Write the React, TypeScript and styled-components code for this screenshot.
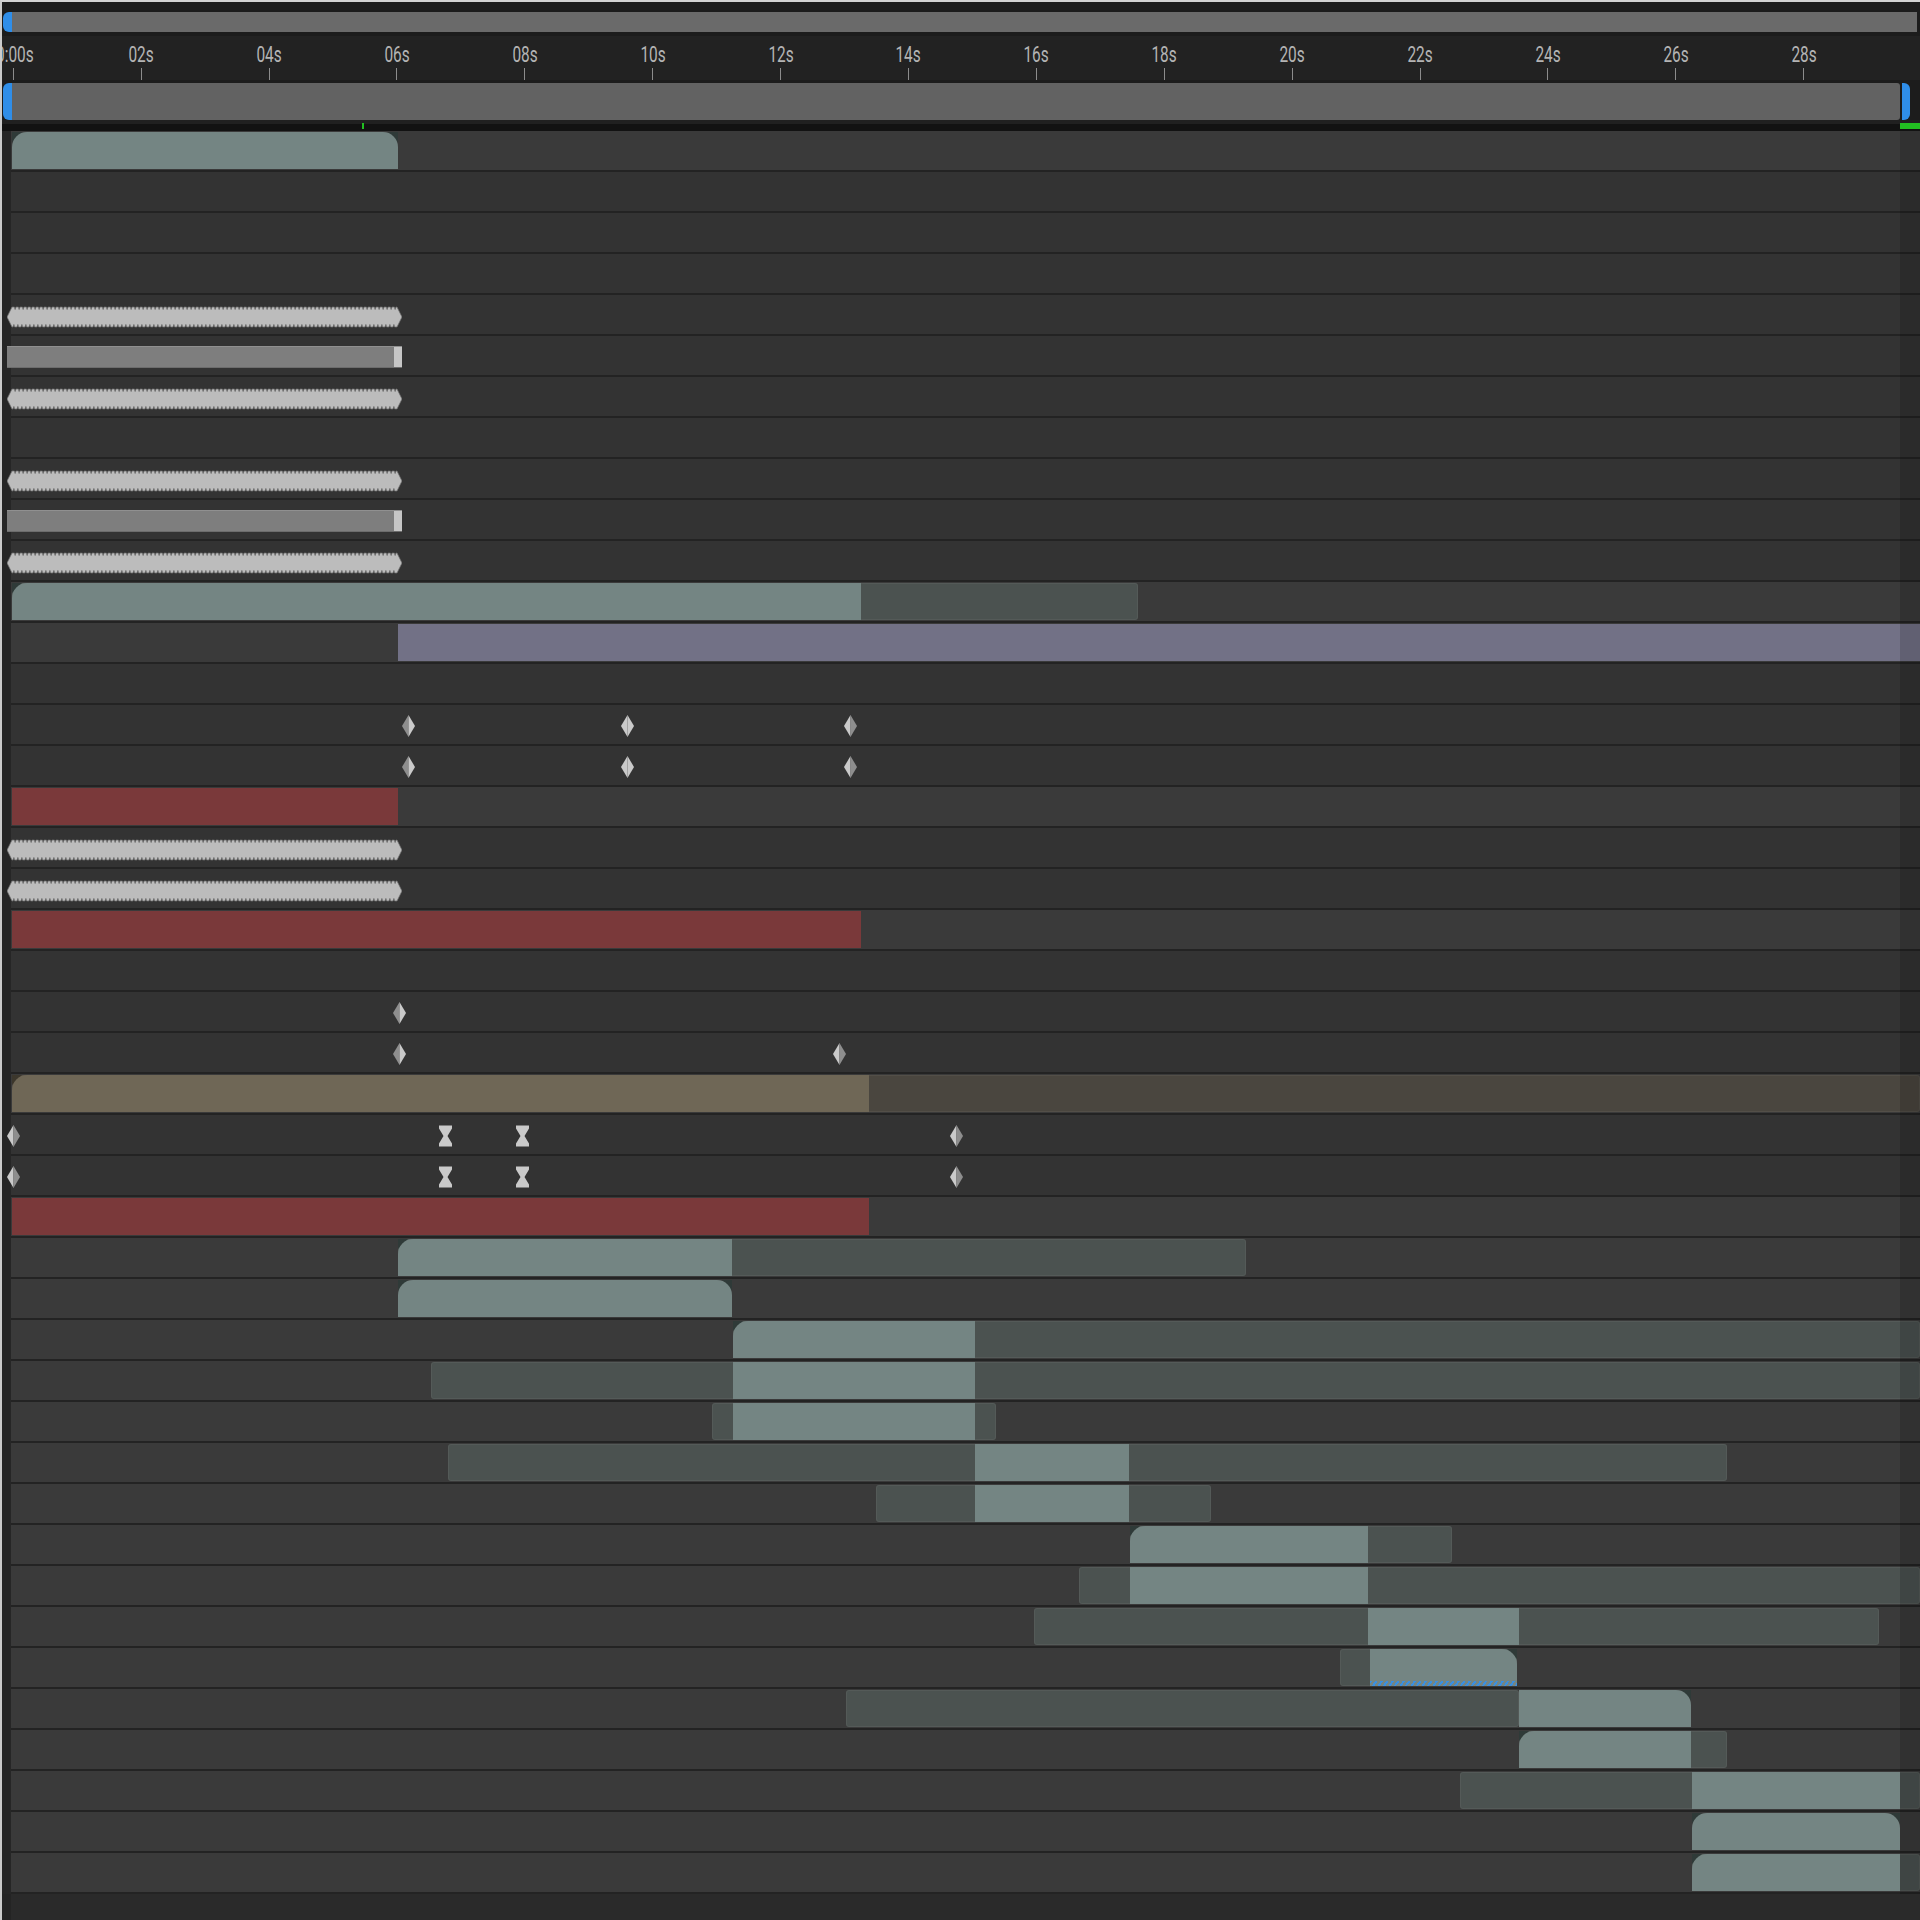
import React from 'react';
import styled, { createGlobalStyle, css } from 'styled-components';

const GlobalStyle = createGlobalStyle`
  html, body { margin: 0; padding: 0; background: #2a2a2a; overflow: hidden; }
  #root { width: 1920px; height: 1920px; }
`;

/* geometry (page px) */
const ROW_LEFT = 11;
const TICK0 = 13.3;
const STEP = 127.9;
const END = 1920;

type Tone = 'teal' | 'red' | 'tan' | 'purple';
type Item =
  | { k: 'clip'; tone: Tone; x1: number; x2: number; nl?: boolean; nr?: boolean; hatch?: boolean }
  | { k: 'ext'; tone: 'teal' | 'tan'; x1: number; x2: number }
  | { k: 'wave' }
  | { k: 'gray' }
  | { k: 'dia'; x: number; v: 'L' | 'R' | 'F' }
  | { k: 'hg'; x: number };

type RowData = { layer: boolean; items: Item[] };

const P = (items: Item[] = []): RowData => ({ layer: false, items });
const L = (items: Item[] = []): RowData => ({ layer: true, items });

const ROWS: RowData[] = [
  L([{ k: 'clip', tone: 'teal', x1: 12, x2: 398, nl: true, nr: true }]),
  P(), P(), P(),
  P([{ k: 'wave' }]),
  P([{ k: 'gray' }]),
  P([{ k: 'wave' }]),
  P(),
  P([{ k: 'wave' }]),
  P([{ k: 'gray' }]),
  P([{ k: 'wave' }]),
  L([{ k: 'ext', tone: 'teal', x1: 12, x2: 1138 }, { k: 'clip', tone: 'teal', x1: 12, x2: 861, nl: true }]),
  L([{ k: 'clip', tone: 'purple', x1: 398, x2: END }]),
  P(),
  P([{ k: 'dia', x: 408, v: 'L' }, { k: 'dia', x: 627, v: 'F' }, { k: 'dia', x: 850, v: 'R' }]),
  P([{ k: 'dia', x: 408, v: 'L' }, { k: 'dia', x: 627, v: 'F' }, { k: 'dia', x: 850, v: 'R' }]),
  L([{ k: 'clip', tone: 'red', x1: 12, x2: 398 }]),
  P([{ k: 'wave' }]),
  P([{ k: 'wave' }]),
  L([{ k: 'clip', tone: 'red', x1: 12, x2: 861 }]),
  P(),
  P([{ k: 'dia', x: 399, v: 'L' }]),
  P([{ k: 'dia', x: 399, v: 'L' }, { k: 'dia', x: 839, v: 'R' }]),
  L([{ k: 'ext', tone: 'tan', x1: 12, x2: END }, { k: 'clip', tone: 'tan', x1: 12, x2: 869, nl: true }]),
  P([{ k: 'dia', x: 13.5, v: 'R' }, { k: 'hg', x: 445 }, { k: 'hg', x: 522 }, { k: 'dia', x: 956, v: 'R' }]),
  P([{ k: 'dia', x: 13.5, v: 'R' }, { k: 'hg', x: 445 }, { k: 'hg', x: 522 }, { k: 'dia', x: 956, v: 'R' }]),
  L([{ k: 'clip', tone: 'red', x1: 12, x2: 869 }]),
  L([{ k: 'ext', tone: 'teal', x1: 398, x2: 1246 }, { k: 'clip', tone: 'teal', x1: 398, x2: 732, nl: true }]),
  L([{ k: 'clip', tone: 'teal', x1: 398, x2: 732, nl: true, nr: true }]),
  L([{ k: 'ext', tone: 'teal', x1: 733, x2: END }, { k: 'clip', tone: 'teal', x1: 733, x2: 975, nl: true }]),
  L([{ k: 'ext', tone: 'teal', x1: 431, x2: END }, { k: 'clip', tone: 'teal', x1: 733, x2: 975 }]),
  L([{ k: 'ext', tone: 'teal', x1: 712, x2: 996 }, { k: 'clip', tone: 'teal', x1: 733, x2: 975 }]),
  L([{ k: 'ext', tone: 'teal', x1: 448, x2: 1727 }, { k: 'clip', tone: 'teal', x1: 975, x2: 1129 }]),
  L([{ k: 'ext', tone: 'teal', x1: 876, x2: 1211 }, { k: 'clip', tone: 'teal', x1: 975, x2: 1129 }]),
  L([{ k: 'ext', tone: 'teal', x1: 1130, x2: 1452 }, { k: 'clip', tone: 'teal', x1: 1130, x2: 1368, nl: true }]),
  L([{ k: 'ext', tone: 'teal', x1: 1079, x2: END }, { k: 'clip', tone: 'teal', x1: 1130, x2: 1368 }]),
  L([{ k: 'ext', tone: 'teal', x1: 1034, x2: 1879 }, { k: 'clip', tone: 'teal', x1: 1368, x2: 1519 }]),
  L([{ k: 'ext', tone: 'teal', x1: 1340, x2: 1517 }, { k: 'clip', tone: 'teal', x1: 1370, x2: 1517, nr: true, hatch: true }]),
  L([{ k: 'ext', tone: 'teal', x1: 846, x2: 1519 }, { k: 'clip', tone: 'teal', x1: 1519, x2: 1691, nr: true }]),
  L([{ k: 'ext', tone: 'teal', x1: 1519, x2: 1727 }, { k: 'clip', tone: 'teal', x1: 1519, x2: 1691, nl: true }]),
  L([{ k: 'ext', tone: 'teal', x1: 1460, x2: END }, { k: 'clip', tone: 'teal', x1: 1692, x2: 1900 }]),
  L([{ k: 'clip', tone: 'teal', x1: 1692, x2: 1900, nl: true, nr: true }]),
  L([{ k: 'ext', tone: 'teal', x1: 1692, x2: END }, { k: 'clip', tone: 'teal', x1: 1692, x2: 1900, nl: true }]),
];

const LABELS = Array.from({ length: 15 }, (_, i) => (i === 0 ? '0:00s' : `${String(i * 2).padStart(2, '0')}s`));

const FILL: Record<Tone, string> = {
  teal: '#748583',
  red: '#7a393a',
  tan: '#6f6756',
  purple: '#727186',
};
const NOTCH: Record<Tone, string> = {
  teal: '#2f3a38',
  red: '#4a2a2a',
  tan: '#3c372c',
  purple: '#4a4a58',
};
const EXT = { teal: '#4b5250', tan: '#4a463f' };

/* ---------- layout ---------- */
const Page = styled.div`
  width: 1920px;
  height: 1920px;
  box-sizing: border-box;
  border-top: 2px solid #d2d2d2;
  border-left: 2px solid #cbcbcb;
  background: #2a2a2a;
  display: flex;
  flex-direction: column;
  overflow: hidden;
  font-family: Roboto, 'Liberation Sans', sans-serif;
`;

const Header = styled.div`
  background: #1c1c1c;
  padding-top: 10px;
  display: flex;
  flex-direction: column;
`;

const ScrollRow = styled.div`
  height: 20px;
  display: flex;
  padding-left: 1px;
`;

const ScrollKnob = styled.div`
  width: 9px;
  background: #2f8ee9;
  border-radius: 6px 0 0 6px;
`;

const ScrollTrack = styled.div`
  flex: 1;
  background: #6a6a6a;
  margin-right: 3px;
`;

const Ruler = styled.div`
  margin-top: 4px;
  height: 44px;
  box-sizing: border-box;
  padding-top: 8px;
  background: #222222;
  display: flex;
  overflow: hidden;
`;

const TickCell = styled.div<{ $first?: boolean }>`
  width: ${STEP}px;
  flex-shrink: 0;
  display: flex;
  flex-direction: column;
  align-items: center;
  margin-left: ${(p) => (p.$first ? `${TICK0 - 2 - STEP / 2}px` : '0')};
`;

const TickLabel = styled.span<{ $first?: boolean }>`
  font-size: 22px;
  line-height: 22px;
  height: 22px;
  color: #b4b4b4;
  transform: ${(p) => (p.$first ? 'translateX(2px) scaleX(0.7)' : 'scaleX(0.7)')};
  white-space: nowrap;
`;

const Tick = styled.div`
  width: 1px;
  height: 12px;
  margin-top: 2px;
  background: #8c8c8c;
`;

const WorkRow = styled.div`
  margin-top: 3px;
  height: 37px;
  display: flex;
  padding-left: 1px;
`;

const WorkHandle = styled.div<{ $side: 'l' | 'r' }>`
  width: ${(p) => (p.$side === 'l' ? 9 : 8)}px;
  background: #2f8ee9;
  ${(p) =>
    p.$side === 'l'
      ? css`border-radius: 6px 0 0 6px;`
      : css`border-radius: 0 6px 6px 0; margin-left: 2px;`}
`;

const WorkBar = styled.div`
  width: 1888px;
  background: #626262;
  border-radius: 0 3px 3px 0;
`;

const Divider = styled.div`
  height: 11px;
  position: relative;
  background: linear-gradient(#202020 0 4px, #121212 4px);
`;

const CurrentMark = styled.div`
  position: absolute;
  left: 360px;
  top: 3px;
  width: 2px;
  height: 6px;
  background: #22c022;
`;

const EndMark = styled.div`
  position: absolute;
  right: 0;
  top: 3px;
  width: 20px;
  height: 6px;
  background: #22c022;
`;

const Tracks = styled.div`
  position: relative;
  display: flex;
  flex-direction: column;
  padding-left: ${ROW_LEFT - 2}px;
  background: #262626;
`;

const Row = styled.div<{ $layer: boolean }>`
  position: relative;
  height: 41px;
  box-sizing: border-box;
  border-bottom: 2px solid #232323;
  background: ${(p) => (p.$layer ? '#3a3a3a' : '#333333')};
`;

const RightShade = styled.div`
  position: absolute;
  top: 0;
  bottom: 0;
  right: 0;
  width: 20px;
  background: rgba(0, 0, 0, 0.15);
  pointer-events: none;
`;

const Bottom = styled.div`
  flex: 1;
  background: #2a2a2a;
  border-left: 9px solid #242424;
`;

/* ---------- clips ---------- */
const ClipBox = styled.div`
  position: absolute;
  top: 1px;
  height: 37px;
`;

const ClipFill = styled.div<{ $tone: Tone; $nl?: boolean; $nr?: boolean }>`
  position: relative;
  width: 100%;
  height: 100%;
  background: ${(p) => FILL[p.$tone]};
  border-top-left-radius: ${(p) => (p.$nl ? '15px' : '0')};
  border-top-right-radius: ${(p) => (p.$nr ? '15px' : '0')};
  overflow: hidden;
`;

const Notch = styled.div<{ $tone: Tone; $side: 'l' | 'r' }>`
  position: absolute;
  top: 0;
  width: 10px;
  height: 10px;
  background: ${(p) => NOTCH[p.$tone]};
  ${(p) =>
    p.$side === 'l'
      ? css`left: 0; clip-path: polygon(0 0, 100% 0, 0 100%);`
      : css`right: 0; clip-path: polygon(0 0, 100% 0, 100% 100%);`}
`;

const Hatch = styled.div`
  position: absolute;
  left: 0;
  right: 0;
  bottom: 0;
  height: 5px;
  background: repeating-linear-gradient(-55deg, #3b8fe0 0 2px, transparent 2px 4.5px);
`;

const ExtBar = styled.div<{ $tone: 'teal' | 'tan' }>`
  position: absolute;
  top: 1px;
  height: 37px;
  box-sizing: border-box;
  border-radius: 3px;
  background: ${(p) => EXT[p.$tone]};
  border: 1px solid rgba(255, 255, 255, 0.05);
`;

const GrayBar = styled.div`
  position: absolute;
  left: ${7 - ROW_LEFT}px;
  top: 10px;
  width: 395px;
  height: 22px;
  box-sizing: border-box;
  background: linear-gradient(90deg, #7e7e7e 0 calc(100% - 8px), #c6c6c6 calc(100% - 8px));
  border-top: 1px solid #909090;
  border-bottom: 1px solid #6c6c6c;
`;

const WaveSvg = styled.svg`
  position: absolute;
  left: ${7 - ROW_LEFT}px;
  top: 11px;
`;

const KeySvg = styled.svg`
  position: absolute;
  top: 10px;
`;

function wavePath(w: number, h: number): string {
  const m = h / 2;
  const pts: string[] = [`M0 ${m}`, `L5 1`];
  for (let x = 5; x < w - 6; x += 4) {
    pts.push(`L${x + 2.4} 1`, `L${x + 3.1} 3.6`, `L${x + 4} 1`);
  }
  pts.push(`L${w - 5} 1`, `L${w} ${m}`, `L${w - 5} ${h - 1}`);
  for (let x = w - 5; x > 6; x -= 4) {
    pts.push(`L${x - 2.4} ${h - 1}`, `L${x - 3.1} ${h - 3.6}`, `L${x - 4} ${h - 1}`);
  }
  pts.push(`L5 ${h - 1}`, 'Z');
  return pts.join(' ');
}
const WAVE_D = wavePath(395, 22);

const Waveform: React.FC = () => (
  <WaveSvg width={395} height={22} viewBox="0 0 395 22">
    <path d={WAVE_D} fill="#bcbcbc" stroke="#6f6f6f" strokeWidth={0.7} strokeLinejoin="round" />
  </WaveSvg>
);

const LIGHT = '#cacaca';
const SHADE = '#8e8e8e';

const Diamond: React.FC<{ x: number; v: 'L' | 'R' | 'F' }> = ({ x, v }) => (
  <KeySvg width={13} height={22} viewBox="0 0 13 22" style={{ left: x - ROW_LEFT - 6.5 }}>
    <polygon points="6.5,0 0,11 6.5,22" fill={v === 'L' ? SHADE : LIGHT} />
    <polygon points="6.5,0 13,11 6.5,22" fill={v === 'R' ? SHADE : LIGHT} />
  </KeySvg>
);

const Hourglass: React.FC<{ x: number }> = ({ x }) => (
  <KeySvg width={15} height={22} viewBox="0 0 15 22" style={{ left: x - ROW_LEFT - 7.5 }}>
    <path d="M1 0.5 H14 V3.5 L9.5 11 L14 18.5 V21.5 H1 V18.5 L5.5 11 L1 3.5 Z" fill={LIGHT} />
  </KeySvg>
);

const Clip: React.FC<{ tone: Tone; x1: number; x2: number; nl?: boolean; nr?: boolean; hatch?: boolean }> = ({
  tone,
  x1,
  x2,
  nl,
  nr,
  hatch,
}) => (
  <ClipBox style={{ left: x1 - ROW_LEFT, width: x2 - x1 }}>
    {nl && <Notch $tone={tone} $side="l" />}
    {nr && <Notch $tone={tone} $side="r" />}
    <ClipFill $tone={tone} $nl={nl} $nr={nr}>
      {hatch && <Hatch />}
    </ClipFill>
  </ClipBox>
);

const renderItem = (it: Item, i: number) => {
  switch (it.k) {
    case 'clip':
      return <Clip key={i} {...it} />;
    case 'ext':
      return <ExtBar key={i} $tone={it.tone} style={{ left: it.x1 - ROW_LEFT, width: it.x2 - it.x1 }} />;
    case 'wave':
      return <Waveform key={i} />;
    case 'gray':
      return <GrayBar key={i} />;
    case 'dia':
      return <Diamond key={i} x={it.x} v={it.v} />;
    case 'hg':
      return <Hourglass key={i} x={it.x} />;
  }
};

export default function App() {
  return (
    <>
      <GlobalStyle />
      <Page>
        <Header>
          <ScrollRow>
            <ScrollKnob />
            <ScrollTrack />
          </ScrollRow>
          <Ruler>
            {LABELS.map((l, i) => (
              <TickCell key={l} $first={i === 0}>
                <TickLabel $first={i === 0}>{l}</TickLabel>
                <Tick />
              </TickCell>
            ))}
          </Ruler>
          <WorkRow>
            <WorkHandle $side="l" />
            <WorkBar />
            <WorkHandle $side="r" />
          </WorkRow>
          <Divider>
            <CurrentMark />
            <EndMark />
          </Divider>
        </Header>
        <Tracks>
          {ROWS.map((r, i) => (
            <Row key={i} $layer={r.layer}>
              {r.items.map(renderItem)}
            </Row>
          ))}
          <RightShade />
        </Tracks>
        <Bottom />
      </Page>
    </>
  );
}
